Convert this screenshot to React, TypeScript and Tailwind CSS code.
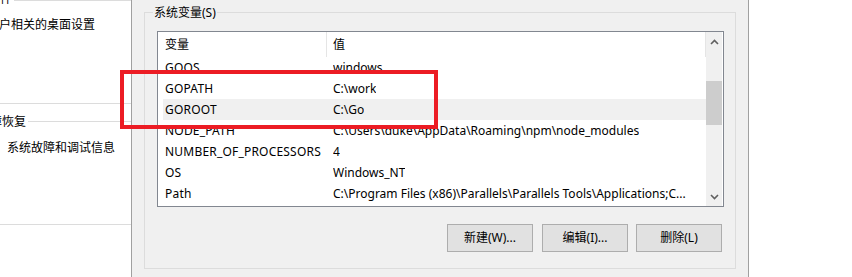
import React from 'react';

interface EnvRow {
  name: string;
  value: string;
  selected?: boolean;
}

const rows: EnvRow[] = [
  { name: 'GOOS', value: 'windows' },
  { name: 'GOPATH', value: 'C:\\work' },
  { name: 'GOROOT', value: 'C:\\Go', selected: true },
  { name: 'NODE_PATH', value: 'C:\\Users\\duke\\AppData\\Roaming\\npm\\node_modules' },
  { name: 'NUMBER_OF_PROCESSORS', value: '4' },
  { name: 'OS', value: 'Windows_NT' },
  { name: 'Path', value: 'C:\\Program Files (x86)\\Parallels\\Parallels Tools\\Applications;C...' },
];

const Chevron: React.FC<{ down?: boolean }> = ({ down }) => (
  <svg width="9" height="6" viewBox="0 0 9 6" className={down ? 'rotate-180' : ''}>
    <path d="M1 5 L4.5 1.5 L8 5" fill="none" stroke="#606060" strokeWidth="1.6" />
  </svg>
);

const PushButton: React.FC<{ label: string; className?: string }> = ({ label, className = '' }) => (
  <button
    className={`flex h-[28px] w-[86px] items-center justify-center border border-[#adadad] bg-[#e1e1e1] text-[12px] ${className}`}
  >
    {label}
  </button>
);

// 左侧被遮住的“系统属性”页
const LeftPage: React.FC = () => (
  <div className="w-[132px] shrink-0 border-r border-[#a0a0a0] bg-white">
    <div className="relative h-[104px] border-y border-[#dcdcdc]">
      <span className="absolute -top-[10px] left-0 bg-white pr-[2px] leading-[16px]">件</span>
      <div className="ml-[-1px] mt-[16px] h-[16px] whitespace-nowrap leading-[16px]">户相关的桌面设置</div>
    </div>
    <div className="relative mt-[17px] h-[104px] border-y border-[#dcdcdc]">
      <span className="absolute -top-[8px] left-[-22px] bg-white pr-[2px] leading-[16px] whitespace-nowrap">
        故障恢复
      </span>
      <div className="ml-[7px] mt-[18px] h-[16px] whitespace-nowrap leading-[16px]">系统故障和调试信息</div>
    </div>
  </div>
);

const VariableList: React.FC = () => (
  <div className="ml-[12px] mt-[18px] flex h-[176px] w-[567px] border border-[#828790] bg-white">
    <div className="flex min-w-0 flex-1 flex-col">
      <div className="flex h-[30px] shrink-0">
        <div className="h-[25px] w-[169px] border-r border-[#e5e5e5] pl-[7px] leading-[25px]">变量</div>
        <div className="h-[25px] flex-1 border-r border-[#e5e5e5] pl-[6px] leading-[25px]">值</div>
      </div>
      <div className="flex-1 overflow-hidden">
        <div className="-mt-[5px]">
          {rows.map((row) => (
            <div
              key={row.name}
              className={`ml-[5px] flex h-[21px] whitespace-nowrap leading-[21px] ${row.selected ? 'bg-[#f0f0f0]' : ''}`}
            >
              <div className="w-[170px] shrink-0 pl-[2px] tracking-[0.2px]">{row.name}</div>
              <div className="truncate">{row.value}</div>
            </div>
          ))}
        </div>
      </div>
    </div>
    <div className="w-[17px] shrink-0 pr-[1px]">
      <div className="flex h-full w-[16px] flex-col bg-[#f0f0f0]">
        <div className="flex h-[18px] shrink-0 items-center justify-center pt-[2px]">
          <Chevron />
        </div>
        <div className="flex-1">
          <div className="mt-[31px] h-[44px] w-full bg-[#cdcdcd]" />
        </div>
        <div className="flex h-[17px] shrink-0 items-center justify-center pb-[2px]">
          <Chevron down />
        </div>
      </div>
    </div>
  </div>
);

export default function App() {
  return (
    <div className="relative flex h-[277px] w-[852px] overflow-hidden bg-white font-[family-name:'Noto_Sans','Noto_Sans_CJK_SC',sans-serif] text-[12px] leading-none text-black">
      <LeftPage />
      <div className="w-[617px] shrink-0 border-r border-[#a0a0a0] bg-[#f0f0f0] pl-[12px] pt-[12px]">
        <div className="relative h-[257px] w-[592px] border border-[#dcdcdc]">
          <span className="absolute -top-[8px] left-[8px] bg-[#f0f0f0] px-[1px] leading-[16px]">系统变量(S)</span>
          <VariableList />
          <div className="ml-[302px] mt-[17px] flex">
            <PushButton label="新建(W)..." />
            <PushButton label="编辑(I)..." className="ml-[9px]" />
            <PushButton label="删除(L)" className="ml-[8px]" />
          </div>
        </div>
      </div>
      <div className="flex-1 bg-white" />
      <div className="pointer-events-none absolute left-[120px] top-[70px] h-[59px] w-[318px] border-4 border-[#ec1c24]" />
    </div>
  );
}
